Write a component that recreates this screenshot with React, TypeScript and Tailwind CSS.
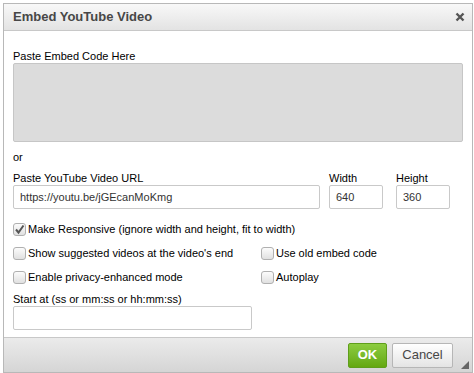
import React from 'react'

const font = "font-['Liberation_Sans',Arial,sans-serif]"

const Box = ({ checked }: { checked?: boolean }) => (
    <span className='relative inline-block w-[13px] h-[13px] rounded-[3px] border border-[#b0b0b0] bg-gradient-to-b from-[#fcfcfc] to-[#e0e0e0] shrink-0'>
        {checked && (
            <svg viewBox='0 0 13 13' className='absolute -left-px -top-px w-[13px] h-[13px]'>
                <path d='M3 6.5 L5.5 9.5 L10.5 2.5' fill='none' stroke='#555' strokeWidth='2' />
            </svg>
        )}
    </span>
)

const Check = ({ label, checked }: { label: string, checked?: boolean }) => (
    <div className='flex items-center gap-[2px] h-[14px]'>
        <Box checked={checked} />
        <span className='leading-[14px]'>{label}</span>
    </div>
)

const Field = ({ value, className }: { value?: string, className: string }) => (
    <div className={`h-[24px] border border-[#c9c9c9] rounded-[2px] bg-white px-[6px] flex items-center text-[11px] text-[#333] ${className}`}>
        {value}
    </div>
)

const App = () => {
    return (
        <div className={`pl-[3px] pt-[3px] bg-white ${font}`}>
            <div className='w-[470px] h-[370px] border border-[#b8b8b8] flex flex-col text-[11px] text-black'>

                <div className='h-[27px] shrink-0 bg-gradient-to-b from-[#f8f8f8] to-[#e3e3e3] border-b border-[#c8c8c8] flex items-center justify-between pl-[9px] pr-[7px]'>
                    <span className='text-[13px] font-bold text-[#474747]'>Embed YouTube Video</span>
                    <svg viewBox='0 0 10 10' className='w-[10px] h-[10px]'>
                        <path d='M1.5 1.5 L8.5 8.5 M8.5 1.5 L1.5 8.5' stroke='#555' strokeWidth='2.4' />
                    </svg>
                </div>

                <div className='flex-1 px-[9px] pt-[18px]'>
                    <div className='leading-[14px]'>Paste Embed Code Here</div>
                    <div className='w-[450px] h-[79px] bg-[#dcdcdc] border border-[#c6c6c6] rounded-[2px]'></div>

                    <div className='mt-[8px] leading-[14px]'>or</div>

                    <div className='mt-[7px] flex'>
                        <div className='w-[307px]'>
                            <div className='leading-[14px]'>Paste YouTube Video URL</div>
                            <Field value='https://youtu.be/jGEcanMoKmg' className='w-[307px]' />
                        </div>
                        <div className='ml-[9px] w-[54px]'>
                            <div className='leading-[14px]'>Width</div>
                            <Field value='640' className='w-[54px]' />
                        </div>
                        <div className='ml-[13px] w-[54px]'>
                            <div className='leading-[14px]'>Height</div>
                            <Field value='360' className='w-[54px]' />
                        </div>
                    </div>

                    <div className='mt-[13px]'>
                        <Check label='Make Responsive (ignore width and height, fit to width)' checked />
                    </div>

                    <div className='mt-[10px] grid grid-cols-[248px_1fr] gap-y-[10px]'>
                        <Check label="Show suggested videos at the video's end" />
                        <Check label='Use old embed code' />
                        <Check label='Enable privacy-enhanced mode' />
                        <Check label='Autoplay' />
                    </div>

                    <div className='mt-[8px] leading-[14px]'>Start at (ss or mm:ss or hh:mm:ss)</div>
                    <Field className='w-[239px] h-[23px]' />
                </div>

                <div className='relative h-[35px] shrink-0 border-t border-[#c8c8c8] bg-gradient-to-b from-[#ebebeb] to-[#d5d5d5] flex items-center justify-end gap-[5px] pr-[19px]'>
                    <button className='w-[39px] h-[25px] rounded-[2px] border border-[#5f9e1b] bg-gradient-to-b from-[#8ccc3f] to-[#64a80f] text-white font-bold text-[13px]'>
                        OK
                    </button>
                    <button className='w-[61px] h-[25px] rounded-[2px] border border-[#b6b6b6] bg-gradient-to-b from-white to-[#e4e4e4] text-[#474747] text-[13px]'>
                        Cancel
                    </button>
                    <svg viewBox='0 0 8 8' className='absolute right-[3px] bottom-[3px] w-[8px] h-[8px]'>
                        <path d='M8 0 L8 8 L0 8 Z' fill='#666' />
                    </svg>
                </div>

            </div>
        </div>
    )
}

export default App
